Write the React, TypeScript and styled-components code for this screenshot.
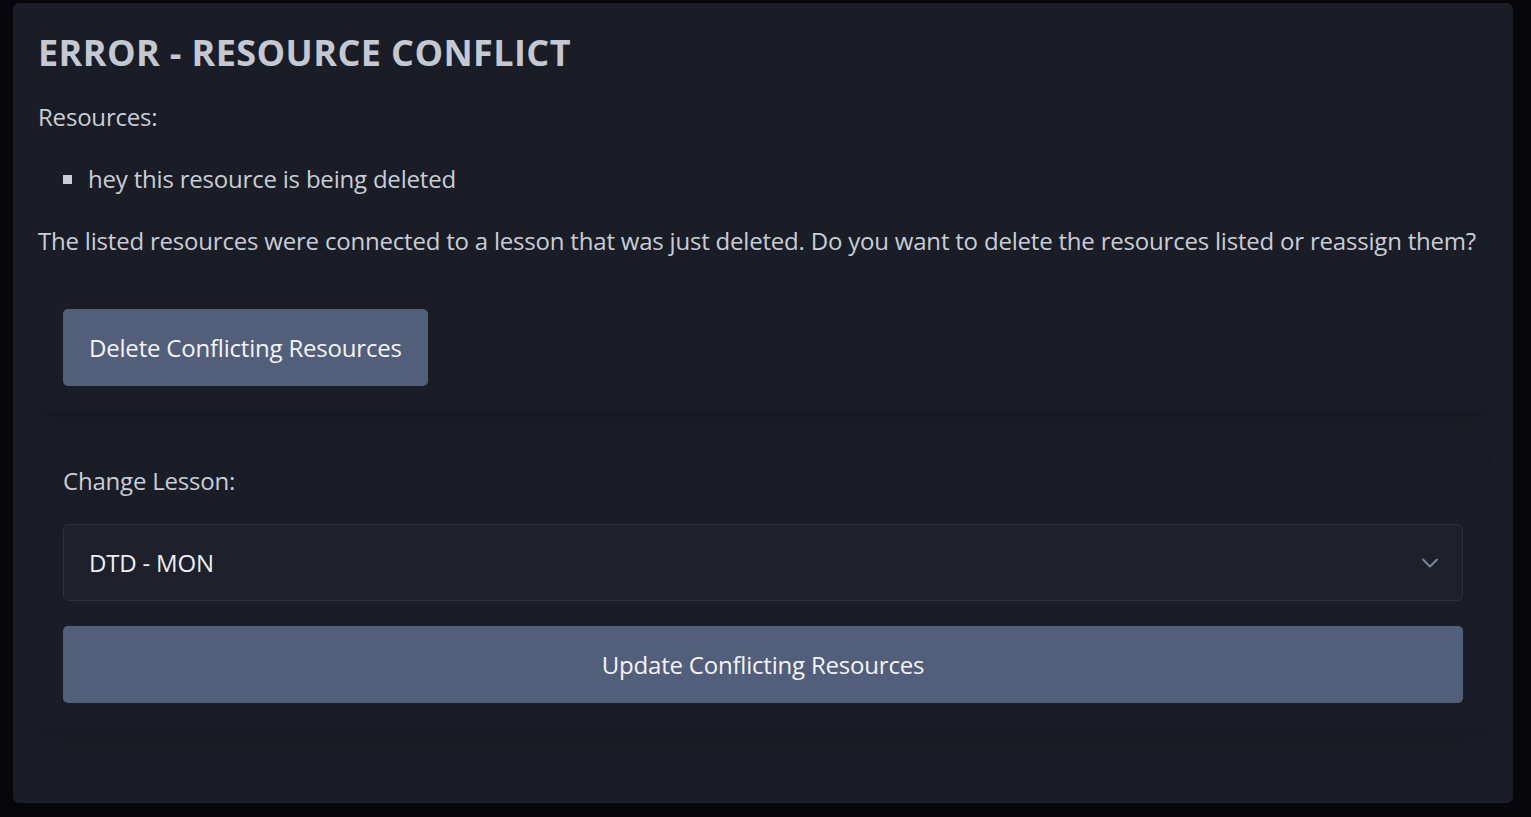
import React from "react";
import styled, { createGlobalStyle } from "styled-components";

const Global = createGlobalStyle`
  html, body { margin: 0; padding: 0; background: #06060b; }
  body { font-family: "Open Sans", "Noto Sans", sans-serif; }
  * { box-sizing: border-box; }
`;

const Page = styled.div`
  padding: 3px 18px 14px 13px;
  min-height: 817px;
  background: #06060b;
`;

const Card = styled.div`
  height: 800px;
  background: #1a1d25;
  border-radius: 6px;
  padding: 26px 25px 0 25px;
  color: #c9cdd6;
`;

const Title = styled.h1`
  margin: 0;
  font-size: 36px;
  line-height: 48px;
  font-weight: 700;
  color: #c3c8d2;
  letter-spacing: 0.4px;
`;

const Text = styled.p<{ $top?: number }>`
  margin: ${(p) => p.$top ?? 0}px 0 0 0;
  font-size: 24px;
  line-height: 34px;
  letter-spacing: -0.2px;
`;

const List = styled.ul`
  margin: 27px 0 28px 0;
  padding-left: 50px;
  list-style: square;
  font-size: 24px;
  line-height: 34px;
  letter-spacing: -0.2px;
  li::marker { font-size: 26px; }
`;

const Section = styled.section<{ $top: number }>`
  margin-top: ${(p) => p.$top}px;
  width: 1450px;
  padding: 25px;
  border-radius: 8px;
  box-shadow: 0 16px 24px -8px rgba(0, 0, 0, 0.09), 0 4px 8px -4px rgba(0, 0, 0, 0.06);
  display: flex;
  flex-direction: column;
  align-items: flex-start;
`;

const Button = styled.button<{ $full?: boolean }>`
  width: ${(p) => (p.$full ? "100%" : "auto")};
  height: 77px;
  padding: 0 26px;
  border: none;
  border-radius: 5px;
  background: #525f7a;
  color: #f3f4f6;
  font-family: inherit;
  font-size: 24px;
  letter-spacing: -0.2px;
  cursor: pointer;
`;

const Label = styled.label`
  font-size: 24px;
  line-height: 34px;
  letter-spacing: -0.2px;
  margin: -2px 0 26px 0;
`;

const SelectBox = styled.div`
  width: 100%;
  height: 77px;
  background: #1e212b;
  border: 1px solid #2c313e;
  border-radius: 6px;
  display: flex;
  align-items: center;
  justify-content: space-between;
  padding: 0 18px 0 25px;
  margin-bottom: 25px;
  font-size: 24px;
  color: #eceef2;
  letter-spacing: -0.2px;
`;

export default function App() {
  return (
    <>
      <Global />
      <Page>
        <Card>
          <Title>ERROR - RESOURCE CONFLICT</Title>
          <Text $top={23}>Resources:</Text>
          <List>
            <li>hey this resource is being deleted</li>
          </List>
          <Text>
            The listed resources were connected to a lesson that was just deleted. Do you want to
            delete the resources listed or reassign them?
          </Text>
          <Section $top={26}>
            <Button>Delete Conflicting Resources</Button>
          </Section>
          <Section $top={30}>
            <Label>Change Lesson:</Label>
            <SelectBox>
              <span>DTD - MON</span>
              <svg width="28" height="28" viewBox="0 0 24 24" fill="none" stroke="#7f889b" strokeWidth="1.6" strokeLinecap="round" strokeLinejoin="round">
                <path d="m6 9 6 6 6-6" />
              </svg>
            </SelectBox>
            <Button $full>Update Conflicting Resources</Button>
          </Section>
        </Card>
      </Page>
    </>
  );
}
